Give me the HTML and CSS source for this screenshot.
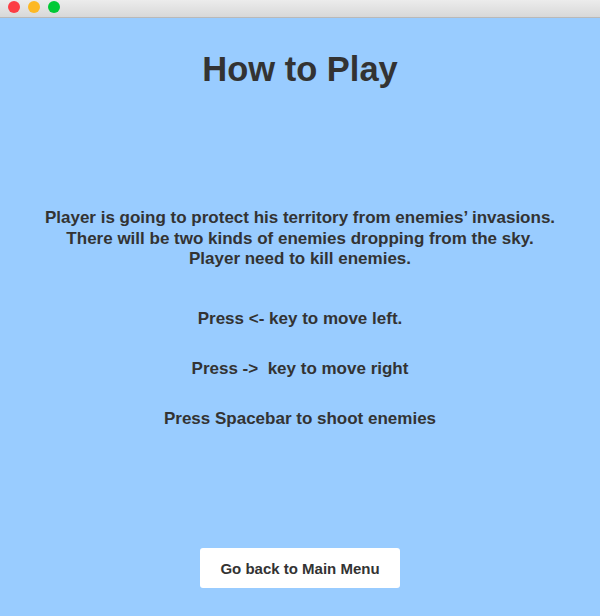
FILE: index.html
```html
<!DOCTYPE html>
<html>
<head>
<meta charset="utf-8">
<link rel="stylesheet" href="styles.css">
</head>
<body>
<div class="titlebar">
  <span class="light red"></span>
  <span class="light yellow"></span>
  <span class="light green"></span>
</div>
<main class="page">
  <h1 class="title">How to Play</h1>
  <p class="story">Player is going to protect his territory from enemies’ invasions.<br>There will be two kinds of enemies dropping from the sky.<br>Player need to kill enemies.</p>
  <div class="keys">
    <p class="key">Press &lt;- key to move left.</p>
    <p class="key">Press -&gt;&nbsp; key to move right</p>
    <p class="key">Press Spacebar to shoot enemies</p>
  </div>
  <button class="back">Go back to Main Menu</button>
</main>
</body>
</html>
```
FILE: styles.css
```css
html, body {
  margin: 0;
  padding: 0;
}
body {
  width: 600px;
  height: 616px;
  overflow: hidden;
  background: #99ccff;
  font-family: "Liberation Sans", Arial, sans-serif;
  color: #333333;
}
.titlebar {
  height: 17px;
  background: linear-gradient(#ececec, #d8d8d8);
  border-bottom: 1px solid #b9b9b9;
  display: flex;
  align-items: center;
  gap: 8px;
  padding-left: 8px;
}
.light {
  width: 12px;
  height: 12px;
  border-radius: 50%;
  display: block;
  margin-top: -3px;
}
.red { background: #fc3d44; }
.yellow { background: #fdb823; }
.green { background: #00c935; }
.page {
  display: flex;
  flex-direction: column;
  align-items: center;
  text-align: center;
}
.title {
  margin: 31px 0 0;
  font-size: 34.5px;
  line-height: 40px;
  font-weight: bold;
}
.story {
  margin: 119px 0 0;
  font-size: 17px;
  line-height: 20.5px;
  font-weight: bold;
}
.keys {
  margin-top: 39.5px;
  display: flex;
  flex-direction: column;
  gap: 30px;
}
.key {
  margin: 0;
  font-size: 17px;
  line-height: 20px;
  font-weight: bold;
}
.back {
  margin-top: 119px;
  width: 200px;
  height: 40px;
  background: #ffffff;
  border: none;
  border-radius: 3px;
  font-family: "Liberation Sans", Arial, sans-serif;
  font-size: 15px;
  font-weight: bold;
  color: #333333;
  cursor: pointer;
}
```
